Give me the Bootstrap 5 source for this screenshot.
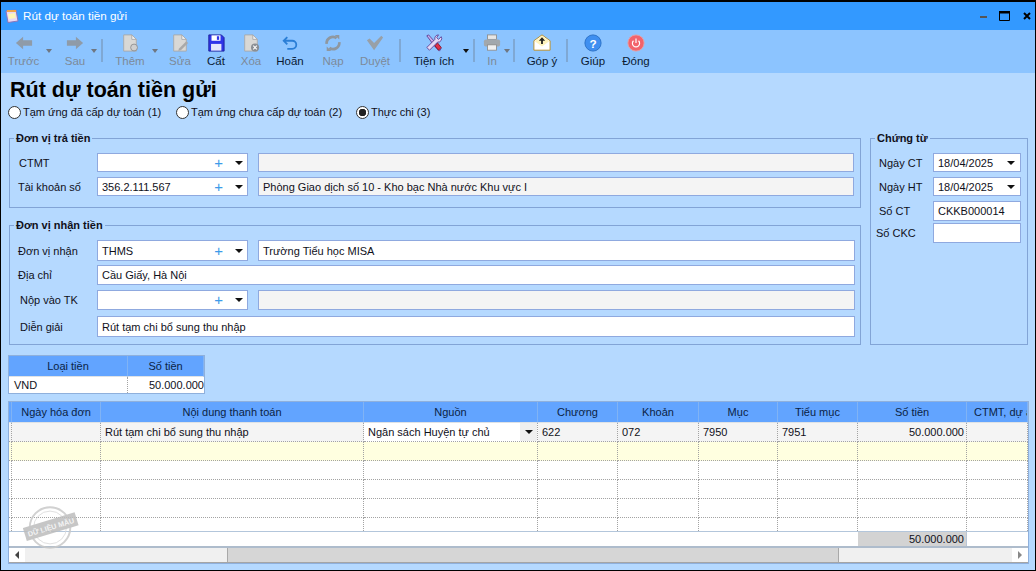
<!DOCTYPE html>
<html lang="vi">
<head>
<meta charset="UTF-8">
<title>Rút dự toán tiền gửi</title>
<link rel="stylesheet" href="https://cdn.jsdelivr.net/npm/bootstrap@5.3.0/dist/css/bootstrap.min.css">
<style>
html, body { margin: 0; height: 100%; overflow: hidden; background: #b5d9ff; }
body { font: 11px/14px "Liberation Sans", Arial, sans-serif; color: #10101a; }
.win { width: 1036px; height: 571px; border: 1px solid #000; border-width: 2px 1px 1px 1px; background: #b5d9ff; overflow: hidden; }
.titlebar { height: 28px; background: #3399ff; color: #fff; padding-left: 3px; padding-right: 3px; font-size: 11.700px; }
.titlebar .name { margin-left: 3px; }
.win-btns svg { display: block; }
.btn-max { margin-left: 11px; }
.btn-close-x { margin-left: 13px; margin-right: 1px; }
.toolbar { height: 43px; background: #8cc4ff; padding-top: 4px; padding-left: 1px; font-size: 11.500px; }
.tool { display: flex; flex-direction: column; align-items: center; flex: none; white-space: nowrap; color: #0b1a33; }
.tool svg { display: block; height: 18px; width: 18px; margin-bottom: 2px; }
.tool.off { color: #7d8a99; }
.caret-d { flex: none; width: 10px; height: 20px; display: flex; justify-content: center; padding-top: 15px; }
.caret-d::after, .tri::after { content: ""; border: 3.500px solid transparent; border-top: 4px solid #6f7782; border-bottom: 0; height: 0; }
.caret-d.on::after { border-top-color: #111; }
.sep { flex: none; width: 2px; height: 23px; margin-top: 5px; background: #7fa8d4; }
.t-truoc { width: 41px; margin-left: 1px; }
.t-sau { width: 28px; margin-left: 7px; }
.s1 { margin-left: 2px; }
.t-them { width: 36px; margin-left: 9px; }
.c-them { margin-left: 2px; }
.t-sua { width: 30px; margin-left: 5px; }
.t-cat { width: 30px; margin-left: 6px; }
.t-xoa { width: 34px; margin-left: 3px; }
.t-hoan { width: 40px; margin-left: 2px; }
.t-nap { width: 34px; margin-left: 6px; }
.t-duyet { width: 40px; margin-left: 5px; }
.s2 { margin-left: 4px; }
.t-tienich { width: 50px; margin-left: 8px; }
.c-tien { margin-left: 2px; }
.s3 { margin-left: 2px; }
.t-in { width: 24px; margin-left: 5px; }
.c-in { margin-left: -2px; width: 9px; }
.s4 { margin-left: 2px; }
.t-gopy { width: 44px; margin-left: 5px; }
.s5 { margin-left: 2px; }
.t-giup { width: 40px; margin-left: 5px; }
.t-dong { width: 40px; margin-left: 3px; }
.main { padding: 0 7px 0 8px; }
h1.doc-title { font: bold 21.500px/28px "Liberation Sans", Arial, sans-serif; margin: 0; padding: 3px 0 1px 1px; color: #000; }
.radios { height: 14px; margin: 0 0 12px -1px; }
.radio-item { display: flex; align-items: center; gap: 2px; flex: none; }
.radio-item.r1 { width: 168px; }
.radio-item.r2 { width: 180px; }
.radio-item .form-check-input { width: 13px; height: 13px; margin: 0; float: none; border: 1px solid #333; background-color: #fff; background-image: none; flex: none; box-shadow: none; }
.radio-item .form-check-input:checked { background-color: #fff; border-color: #333; background-image: radial-gradient(circle, #222 0 3.500px, transparent 4px); }
fieldset.grp { border: 1px solid #82a4d6; padding: 0; margin: 0; }
fieldset.grp legend { float: none; width: auto; font: bold 11px/14px "Liberation Sans", Arial, sans-serif; margin: 0 0 0 4px; padding: 0 2px; color: #10101a; }
.g-pay { padding-bottom: 11px !important; padding-top: 8px !important; }
.g-recv { margin-top: 10px !important; padding-top: 8px !important; padding-bottom: 3px !important; }
.g-doc { width: 158px; flex: none; padding-top: 8px !important; }
.g-left { width: 852px; flex: none; }
.frow { display: flex; align-items: center; height: 19px; margin-bottom: 5px; }
.frow:last-child { margin-bottom: 0; }
.frow label { margin: 0; flex: none; width: 87px; padding-left: 8px; }
.frow label.in2 { padding-left: 10px; }
.frow label.in0 { padding-left: 9px; }
.box.form-control { border: 1px solid #8fa9df; border-radius: 0; background: #fff; height: 100%; padding: 0 4px; font: inherit; color: #10101a; display: flex; align-items: center; min-height: 0; white-space: nowrap; width: auto; }
.combo { flex: none; width: 151px !important; }
.plus { margin-left: auto; color: #3d9be9; font-size: 15px; margin-right: 12px; }
.tri { display: flex; margin-right: 0; }
.tri::after { border-top-color: #111; border-width: 4px 4px 0; }
.desc { margin-left: 10px; flex: none; width: 596px !important; }
.desc.lg { width: 597px !important; }
.desc.off { background: #f4f4f4 !important; }
.box.wide { flex: none; width: 758px !important; }
.h20 { height: 20px; }
.h21 { height: 21px; }
.g-recv .frow { margin-bottom: 4px; }
.g-recv .frow.m5 { margin-bottom: 5px; }
.g-recv .frow.m6 { margin-bottom: 6px; }
.g-doc .frow label { width: 62px; padding-left: 8px; }
.g-doc .frow { margin-bottom: 5px; }
.g-doc .box { flex: none; width: 88px !important; }
.g-doc .frow.tight { height: 20px; margin-bottom: 2px; }
.g-doc .frow label.out { padding-left: 5px; }
.g-doc .tri { margin-left: auto; margin-right: 1px; }
.mini { width: 197px; margin-top: 10px; margin-left: -1px; border: 1px solid #8fb0dc; background: #fff; }
.mini .c1 { width: 119px; }
.mini .c2 { width: 76px; }
.grid-t { table-layout: fixed; border-collapse: separate; border-spacing: 0; margin: 0; width: auto; }
.grid-t th { background: #62a4ff; color: #0b1f45; font-weight: 400; text-align: center; vertical-align: middle; height: 20px; padding: 0; border-right: 1px solid #80b3f5; white-space: nowrap; overflow: hidden; }
.grid-t td { padding: 0 4px; height: 19px; vertical-align: middle; border-right: 1px dotted #a3a3a3; border-bottom: 1px dotted #a3a3a3; white-space: nowrap; overflow: hidden; background: #fff; color: #10101a; }
.mini th { height: 21px; }
.mini td { height: 16px; border-bottom: 0; padding-left: 5px; }
.num { text-align: right; }
.grid-t td.num { padding-right: 2px; }
.mini .grid-t td.num { padding-right: 0; border-right: 0; }
.big { width: 1021px; margin-top: 7px; margin-left: -1px; height: 163px; border: 1px solid #8fb0dc; background: #fff; position: relative; overflow: hidden; display: flex; flex-direction: column; }
.big .tbl-wrap { height: 144px; overflow: hidden; flex: none; }
.big th { height: 21px; }
.big th.last { text-align: left; padding-left: 7px; }
#main-grid { width: 1019px; }
.g0 { width: 3px; } .g1 { width: 89px; } .g2 { width: 263px; } .g3 { width: 174px; } .g4 { width: 80px; }
.g5 { width: 81px; } .g6 { width: 79px; } .g7 { width: 80px; } .g8 { width: 109px; } .g9 { width: 61px; }
#main-grid td:first-child, #main-grid th:first-child { padding: 0; }
.grid-t tr.r-grey td { background: #f4f4f4; }
.grid-t tr.r-yel td { background: #ffffe0; }
.grid-t tr.r-cut td { height: 13px; border-bottom: 0; }
.grid-t tfoot td { height: 15px; border-top: 1px solid #b3c6db; border-bottom: 0; border-right: 0; }
.grid-t tfoot td.sum { background: #d3d3d3; border-right: 1px solid #b9c6d6; }
.grid-t tr.r-grey td.src { padding: 0; background: #fff; }
.src-in { display: flex; align-items: center; height: 18px; padding-left: 4px; }
.src-in span { flex: 1 1 auto; }
.src-in .drop { flex: none; width: 17px; height: 100%; background: #efefef; display: flex; align-items: center; justify-content: center; }
.src-in .drop::after { content: ""; border: 4px solid transparent; border-top: 4px solid #111; border-bottom: 0; }
.hscroll { height: 17px; background: #f0f0f0; border-top: 2px solid #aebccc; border-bottom: 1px solid #a5a5a5; display: flex; flex: none; }
.sb-btn { flex: none; width: 16px; background: #fff; display: flex; align-items: center; justify-content: center; }
.sb-l::after { content: ""; border: 4px solid transparent; border-right: 4px solid #444; border-left: 0; }
.sb-r::after { content: ""; border: 4px solid transparent; border-left: 4px solid #888; border-right: 0; }
.sb-space-a { width: 202px; flex: none; }
.sb-thumb { width: 612px; flex: none; background: #d6d6d6; border-left: 1px solid #a9a9a9; border-right: 1px solid #a9a9a9; }
.sb-space-b { flex: 1 1 auto; }
.stamp { position: absolute; left: 14px; bottom: 12px; width: 56px; height: 47px; opacity: .85; }
</style>
</head>
<body>
<div class="win">
  <div class="titlebar d-flex align-items-center">
    <svg width="16" height="16" viewBox="0 0 16 16"><path d="M2 3 12 2l2 11-10 1.500z" fill="#e9d9f4" stroke="#8d76b8"/><path d="M4 6l7-1 .8 5-7 1z" fill="#fff6b8"/><path d="M3 2h9v2H3z" fill="#f0a64c"/></svg>
    <span class="name">Rút dự toán tiền gửi</span>
    <div class="win-btns ms-auto d-flex align-items-center">
      <svg width="8" height="3" viewBox="0 0 8 3"><rect width="7" height="2" y="1" fill="#555"/></svg>
      <svg class="btn-max" width="11" height="11" viewBox="0 0 11 11"><path d="M.5.500h10v9H.5z" fill="none" stroke="#000"/><rect width="11" height="2.500" fill="#000"/></svg>
      <svg class="btn-close-x" width="8" height="8" viewBox="0 0 8 8"><path d="M1 1l6 6M7 1 1 7" stroke="#000" stroke-width="2"/></svg>
    </div>
  </div>

  <div class="toolbar d-flex">
    <div class="tool off t-truoc"><svg viewBox="0 0 20 20"><path d="M1 10 9 3v4h10v6H9v4z" fill="#8f9ba8"/></svg>Trước</div>
    <div class="caret-d"></div>
    <div class="tool off t-sau"><svg viewBox="0 0 20 20"><path d="M19 10 11 3v4H1v6h10v4z" fill="#8f9ba8"/></svg>Sau</div>
    <div class="caret-d"></div>
    <div class="sep s1"></div>
    <div class="tool off t-them"><svg viewBox="0 0 20 20"><path d="M3 1h9l5 5v13H3z" fill="#d9d8d5" stroke="#a9a9a9"/><path d="M12 1v5h5z" fill="#f2f2f2" stroke="#a9a9a9"/><circle cx="14.500" cy="15" r="3.800" fill="#cfcfcf" stroke="#8e8e8e"/></svg>Thêm</div>
    <div class="caret-d c-them"></div>
    <div class="tool off t-sua"><svg viewBox="0 0 20 20"><path d="M3 1h9l5 5v13H3z" fill="#d9d8d5" stroke="#a9a9a9"/><path d="M12 1v5h5z" fill="#f2f2f2" stroke="#a9a9a9"/><path d="m9 16 8-8 2 2-8 8-3 .6z" fill="#a9a9a9"/></svg>Sửa</div>
    <div class="tool t-cat"><svg viewBox="0 0 20 20"><path d="M2 1h14l3 3v15H2z" fill="#2f35e8" stroke="#1c1f9a"/><rect x="5" y="1.500" width="10" height="6" fill="#fff"/><rect x="11" y="2.500" width="2.500" height="4" fill="#2f35e8"/><rect x="4.500" y="11" width="11.500" height="7.500" fill="#e4e8fb"/></svg>Cất</div>
    <div class="tool off t-xoa"><svg viewBox="0 0 20 20"><path d="M3 1h9l5 5v13H3z" fill="#d9d8d5" stroke="#a9a9a9"/><path d="M12 1v5h5z" fill="#f2f2f2" stroke="#a9a9a9"/><circle cx="14.500" cy="15" r="4.500" fill="#8b8f94"/><path d="m12.500 13 4 4m0-4-4 4" stroke="#fff" stroke-width="1.200"/></svg>Xóa</div>
    <div class="tool t-hoan"><svg viewBox="0 0 20 20"><path d="M7 3.500 3 7.500l4 4M3 7.500h9.500a4.500 4.500 0 0 1 0 9H7" fill="none" stroke="#2a7ed6" stroke-width="2"/></svg>Hoãn</div>
    <div class="tool off t-nap"><svg viewBox="0 0 20 20"><path d="M3 11a7 7 0 0 1 11-6.500M17 9a7 7 0 0 1-11 6.500" fill="none" stroke="#8f979f" stroke-width="3"/><path d="M12 1h5v5zM8 19H3v-5z" fill="#8f979f"/></svg>Nạp</div>
    <div class="tool off t-duyet"><svg viewBox="0 0 20 20"><path d="M1 7l3-2 5 5 8-8 2 2-10 14z" fill="#98a0a8"/></svg>Duyệt</div>
    <div class="sep s2"></div>
    <div class="tool t-tienich"><svg viewBox="0 0 20 20"><path d="M2 2 4 1l9 10 5 5-2 3-5-5z" fill="#c8b0ea" stroke="#5d3f95"/><path d="m11 13 3-3 4 5-3 3z" fill="#e0304a" stroke="#8a1526"/><path d="M18 3l-3 3-2-2 2-3a4 4 0 0 0-4 5L2 15l3 3 9-9a4 4 0 0 0 4-6z" fill="#e3d8f5" stroke="#5d3f95"/></svg>Tiện ích</div>
    <div class="caret-d c-tien on"></div>
    <div class="sep s3"></div>
    <div class="tool off t-in"><svg viewBox="0 0 20 20"><rect x="5" y="1" width="10" height="5" fill="#e6e6e6" stroke="#8f8f8f"/><rect x="1" y="6" width="18" height="8" rx="2" fill="#a2a8ad"/><rect x="5" y="12" width="10" height="6" fill="#f0f0f0" stroke="#8f8f8f"/></svg>In</div>
    <div class="caret-d c-in"></div>
    <div class="sep s4"></div>
    <div class="tool t-gopy"><svg viewBox="0 0 20 20"><path d="M1 7.500 10 1l9 6.500V18H1z" fill="#fff" stroke="#b98a1e"/><path d="M2 8l8 6 8-6-8-6z" fill="#fff3bc"/><path d="M10 3.500 6.500 7.500H9V11h2V7.500h2.500z" fill="#222"/></svg>Góp ý</div>
    <div class="sep s5"></div>
    <div class="tool t-giup"><svg viewBox="0 0 20 20"><circle cx="10" cy="10" r="9" fill="#3f8ff0" stroke="#2a6fc4"/><text x="10" y="15" text-anchor="middle" font-family="Liberation Sans" font-weight="700" font-size="13" fill="#fff">?</text></svg>Giúp</div>
    <div class="tool t-dong"><svg viewBox="0 0 20 20"><circle cx="10" cy="10" r="9" fill="#f2636b" stroke="#e6a0a4"/><path d="M7.200 7.500a4 4 0 1 0 5.600 0" fill="none" stroke="#fff" stroke-width="1.300"/><path d="M10 5v5" stroke="#fff" stroke-width="1.300"/></svg>Đóng</div>
  </div>

  <div class="main">
    <h1 class="doc-title">Rút dự toán tiền gửi</h1>
    <div class="radios d-flex align-items-center">
      <div class="radio-item r1"><input class="form-check-input" type="radio" name="kind" id="k1"><label for="k1">Tạm ứng đã cấp dự toán (1)</label></div>
      <div class="radio-item r2"><input class="form-check-input" type="radio" name="kind" id="k2"><label for="k2">Tạm ứng chưa cấp dự toán (2)</label></div>
      <div class="radio-item r3"><input class="form-check-input" type="radio" name="kind" id="k3" checked><label for="k3">Thực chi (3)</label></div>
    </div>

    <div class="d-flex gap-2 justify-content-between">
      <div class="g-left">
        <fieldset class="grp g-pay">
          <legend>Đơn vị trả tiền</legend>
          <div class="frow">
            <label class="in0">CTMT</label>
            <div class="box form-control combo"><span class="plus">+</span><span class="tri"></span></div>
            <div class="box form-control desc off"></div>
          </div>
          <div class="frow">
            <label>Tài khoản số</label>
            <div class="box form-control combo">356.2.111.567<span class="plus">+</span><span class="tri"></span></div>
            <div class="box form-control desc off">Phòng Giao dịch số 10 - Kho bạc Nhà nước Khu vực I</div>
          </div>
        </fieldset>
        <fieldset class="grp g-recv">
          <legend>Đơn vị nhận tiền</legend>
          <div class="frow h21">
            <label>Đơn vị nhận</label>
            <div class="box form-control combo">THMS<span class="plus">+</span><span class="tri"></span></div>
            <div class="box form-control desc lg">Trường Tiểu học MISA</div>
          </div>
          <div class="frow h20 m5">
            <label>Địa chỉ</label>
            <div class="box form-control wide">Cầu Giấy, Hà Nội</div>
          </div>
          <div class="frow h20 m6">
            <label class="in2">Nộp vào TK</label>
            <div class="box form-control combo"><span class="plus">+</span><span class="tri"></span></div>
            <div class="box form-control desc lg off"></div>
          </div>
          <div class="frow h21">
            <label class="in2">Diễn giải</label>
            <div class="box form-control wide">Rút tạm chi bổ sung thu nhập</div>
          </div>
        </fieldset>
      </div>
      <fieldset class="grp g-doc">
        <legend>Chứng từ</legend>
        <div class="frow"><label>Ngày CT</label><div class="box form-control">18/04/2025<span class="tri"></span></div></div>
        <div class="frow"><label>Ngày HT</label><div class="box form-control">18/04/2025<span class="tri"></span></div></div>
        <div class="frow tight"><label>Số CT</label><div class="box form-control">CKKB000014</div></div>
        <div class="frow tight"><label class="out">Số CKC</label><div class="box form-control"></div></div>
      </fieldset>
    </div>

    <div class="mini">
      <table class="table grid-t">
        <colgroup><col class="c1"><col class="c2"></colgroup>
        <thead><tr><th>Loại tiền</th><th>Số tiền</th></tr></thead>
        <tbody><tr><td>VND</td><td class="num">50.000.000</td></tr></tbody>
      </table>
    </div>

    <div class="big">
      <div class="tbl-wrap">
        <table class="table grid-t" id="main-grid">
          <colgroup>
            <col class="g0"><col class="g1"><col class="g2"><col class="g3"><col class="g4"><col class="g5"><col class="g6"><col class="g7"><col class="g8"><col class="g9">
          </colgroup>
          <thead>
            <tr><th></th><th>Ngày hóa đơn</th><th>Nội dung thanh toán</th><th>Nguồn</th><th>Chương</th><th>Khoản</th><th>Mục</th><th>Tiểu mục</th><th>Số tiền</th><th class="last">CTMT, dự án</th></tr>
          </thead>
          <tbody>
            <tr class="r-grey"><td></td><td></td><td>Rút tạm chi bổ sung thu nhập</td><td class="src"><div class="src-in"><span>Ngân sách Huyện tự chủ</span><div class="drop"></div></div></td><td>622</td><td>072</td><td>7950</td><td>7951</td><td class="num">50.000.000</td><td></td></tr>
            <tr class="r-yel"><td></td><td></td><td></td><td></td><td></td><td></td><td></td><td></td><td></td><td></td></tr>
            <tr><td></td><td></td><td></td><td></td><td></td><td></td><td></td><td></td><td></td><td></td></tr>
            <tr><td></td><td></td><td></td><td></td><td></td><td></td><td></td><td></td><td></td><td></td></tr>
            <tr><td></td><td></td><td></td><td></td><td></td><td></td><td></td><td></td><td></td><td></td></tr>
            <tr class="r-cut"><td></td><td></td><td></td><td></td><td></td><td></td><td></td><td></td><td></td><td></td></tr>
          </tbody>
          <tfoot>
            <tr><td colspan="8"></td><td class="sum num">50.000.000</td><td></td></tr>
          </tfoot>
        </table>
      </div>
      <div class="hscroll">
        <div class="sb-btn sb-l"></div>
        <div class="sb-space-a"></div>
        <div class="sb-thumb"></div>
        <div class="sb-space-b"></div>
        <div class="sb-btn sb-r"></div>
      </div>
      <svg class="stamp" viewBox="0 0 58 48">
        <circle cx="28" cy="24" r="21" fill="none" stroke="#c9c9c9" stroke-width="2"/>
        <circle cx="28" cy="24" r="17" fill="none" stroke="#dadada" stroke-width="1"/>
        <g transform="rotate(-17 29 24)">
          <rect x="1" y="16" width="56" height="14" fill="#bdbdbd"/>
          <text x="29" y="26.500" text-anchor="middle" font-family="Liberation Sans" font-weight="700" font-size="7.500" fill="#f2f2f2">DỮ LIỆU MẪU</text>
        </g>
      </svg>
    </div>
  </div>
</div>
</body>
</html>
